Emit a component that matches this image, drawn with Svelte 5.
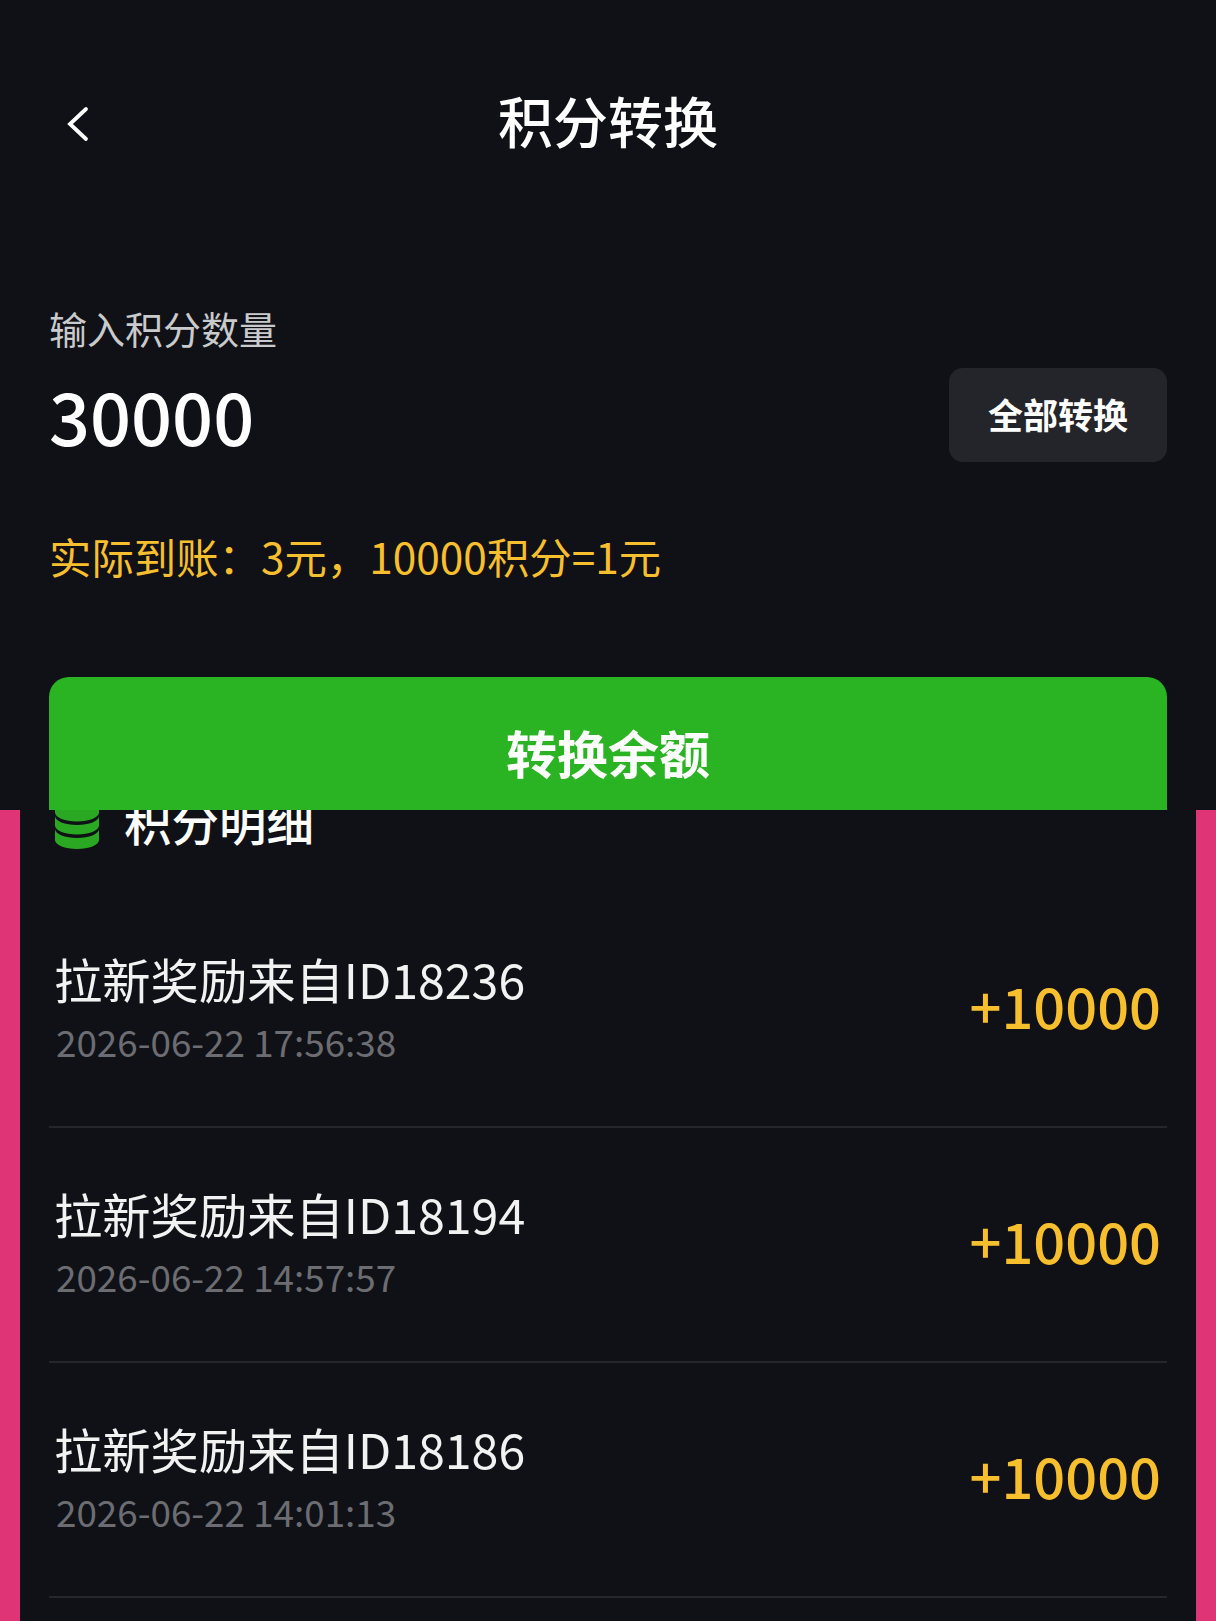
<script>
  const records = [
    { title: '拉新奖励来自ID18236', time: '2026-06-22 17:56:38', amount: '+10000' },
    { title: '拉新奖励来自ID18194', time: '2026-06-22 14:57:57', amount: '+10000' },
    { title: '拉新奖励来自ID18186', time: '2026-06-22 14:01:13', amount: '+10000' }
  ];
</script>

<div class="page">
  <section class="top">
    <header class="nav">
      <button class="back" aria-label="返回">
        <svg width="24" height="36" viewBox="0 0 24 36" fill="none">
          <path d="M20 3 L4 18 L20 33" stroke="#fff" stroke-width="3.8" stroke-linecap="round" />
        </svg>
      </button>
      <h1>积分转换</h1>
    </header>

    <div class="form">
      <div class="label">输入积分数量</div>
      <div class="input-row">
        <div class="value">30000</div>
        <button class="all">全部转换</button>
      </div>
      <div class="rate">实际到账：3元，10000积分=1元</div>
      <button class="submit">转换余额</button>
    </div>
  </section>

  <section class="details">
    <div class="inner">
      <div class="heading">
        <svg width="46" height="56" viewBox="0 0 46 56">
          <path d="M1 8v11.5c0 5 10 9 22 9s22-4 22-9V8z" fill="#2aa823" />
          <ellipse cx="23" cy="8" rx="22" ry="8" fill="#2aa823" />
          <path d="M1 23v9.5c0 5 10 9 22 9s22-4 22-9V23c0 5-10 9-22 9S1 28 1 23z" fill="#2aa823" />
          <path d="M1 36v11c0 5 10 9 22 9s22-4 22-9V36c0 5-10 9-22 9S1 41 1 36z" fill="#2aa823" />
        </svg>
        <h2>积分明细</h2>
      </div>

      {#each records as r}
        <div class="record">
          <div class="info">
            <div class="title">{r.title}</div>
            <div class="time">{r.time}</div>
          </div>
          <div class="amount">{r.amount}</div>
        </div>
      {/each}
    </div>
  </section>
</div>

<style>
  :global(body) {
    margin: 0;
    background: #101116;
  }

  .page {
    width: 1216px;
    height: 1621px;
    overflow: hidden;
    background: #101116;
    color: #fff;
    font-family: "Noto Sans CJK SC", "Noto Sans", sans-serif;
  }

  button {
    font-family: inherit;
    border: none;
    padding: 0;
    color: #fff;
  }

  .top {
    position: relative;
    z-index: 1;
    height: 810px;
    overflow: hidden;
    box-sizing: border-box;
    padding: 0 49px;
    background: #101116;
  }

  .nav {
    height: 246px;
    display: flex;
    justify-content: center;
    position: relative;
  }

  .nav h1 {
    margin: 92px 0 0;
    font-size: 55px;
    font-weight: 500;
    line-height: 1;
  }

  .back {
    position: absolute;
    left: 17px;
    top: 106px;
    background: none;
    line-height: 0;
  }

  .label {
    font-size: 38px;
    line-height: 56px;
    color: #c9cacc;
    margin-top: 54px;
  }

  .input-row {
    display: flex;
    justify-content: space-between;
    align-items: flex-start;
    height: 124px;
    margin-top: 6px;
  }

  .value {
    font-size: 72px;
    font-weight: 500;
    line-height: 90px;
    margin-top: 8px;
  }

  .all {
    width: 218px;
    height: 94px;
    margin-top: 6px;
    padding-bottom: 4px;
    border-radius: 14px;
    background: #24252a;
    font-size: 35px;
    font-weight: 700;
  }

  .rate {
    font-size: 42.4px;
    line-height: 56px;
    color: #f7bf2d;
    margin-top: 42px;
  }

  .submit {
    display: block;
    width: 100%;
    height: 156px;
    margin-top: 93px;
    padding-bottom: 6px;
    border-radius: 20px;
    background: #2ab322;
    font-size: 51px;
    font-weight: 700;
    text-align: center;
  }

  .details {
    height: 811px;
    overflow: hidden;
    border-left: 20px solid #df3577;
    border-right: 20px solid #df3577;
  }

  .inner {
    padding: 0 29px;
    margin-top: -21px;
  }

  .heading {
    display: flex;
    align-items: center;
    gap: 24px;
    height: 64px;
    padding-left: 5px;
    margin-bottom: 40px;
  }

  .heading h2 {
    margin: 0;
    font-size: 47.5px;
    font-weight: 500;
    line-height: 64px;
  }

  .record {
    display: flex;
    justify-content: space-between;
    align-items: center;
    height: 223px;
    padding: 0 7px 10px;
    border-bottom: 2px solid #26272c;
  }

  .info {
    padding-top: 2px;
  }

  .title {
    font-size: 48.3px;
    line-height: 64px;
    color: #f2f2f2;
    margin-left: -2px;
  }

  .time {
    font-size: 36.8px;
    line-height: 50px;
    color: #6c6d72;
    margin-top: 6px;
  }

  .amount {
    font-size: 56px;
    font-weight: 500;
    color: #f7bf2d;
    margin-right: -1px;
  }
</style>
